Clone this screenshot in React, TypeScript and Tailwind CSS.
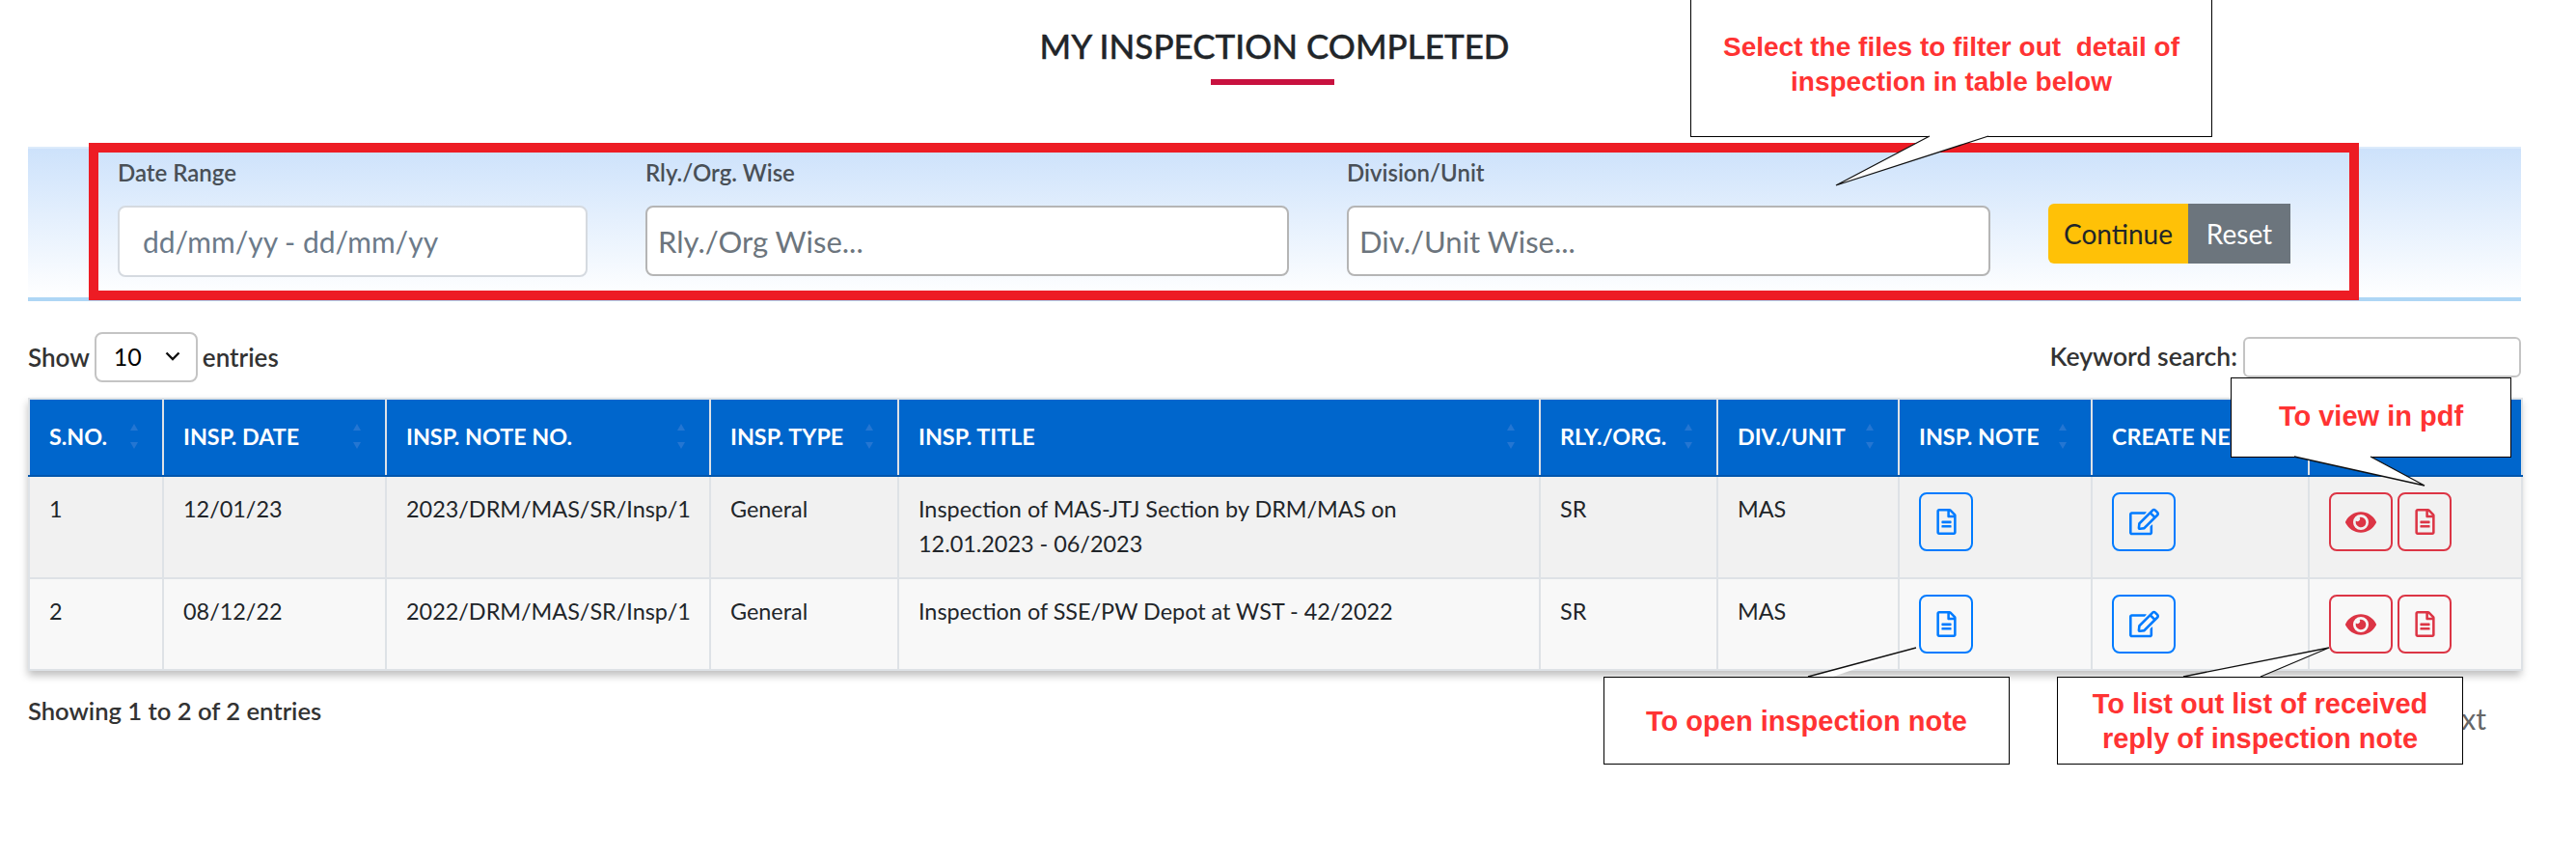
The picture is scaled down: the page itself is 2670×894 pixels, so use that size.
import React from 'react';
import { FaEye, FaRegEdit, FaRegFileAlt } from 'react-icons/fa';

const headers = [
  { label: 'S.NO.', sort: true },
  { label: 'INSP. DATE', sort: true },
  { label: 'INSP. NOTE NO.', sort: true },
  { label: 'INSP. TYPE', sort: true },
  { label: 'INSP. TITLE', sort: true },
  { label: 'RLY./ORG.', sort: true },
  { label: 'DIV./UNIT', sort: true },
  { label: 'INSP. NOTE', sort: true },
  { label: 'CREATE NEW', sort: false },
  { label: 'ACTION', sort: false },
];

const rows = [
  {
    no: '1',
    date: '12/01/23',
    note: '2023/DRM/MAS/SR/Insp/1',
    title: 'Inspection of MAS-JTJ Section by DRM/MAS on 12.01.2023 - 06/2023',
    bg: 'bg-[#f1f1f1]',
  },
  {
    no: '2',
    date: '08/12/22',
    note: '2022/DRM/MAS/SR/Insp/1',
    title: 'Inspection of SSE/PW Depot at WST - 42/2022',
    bg: 'bg-[#f8f8f8]',
  },
];

function SortArrows() {
  return (
    <svg width="10" height="26" viewBox="0 0 10 26" className="shrink-0 fill-[#2476d2]">
      <path d="M5 0 9 7H1z" />
      <path d="M5 26 1 19h8z" />
    </svg>
  );
}

function Tails() {
  const tails = [
    { fill: '2000,141 1903,192 2061,141', lines: 'M2000 141 1903 192 2061 141' },
    { fill: '2378,473 2513,503 2457,473', lines: 'M2378 473 2513 503 2457 473' },
    { fill: '1874,701 1986,671 1900,701', lines: 'M1874 701 1986 671' },
    { fill: '2263,701 2414,671 2343,701', lines: 'M2263 701 2414 671 2343 701' },
  ];
  return (
    <svg width="2670" height="894" className="absolute left-0 top-0 pointer-events-none">
      {tails.map(t => (
        <g key={t.fill}>
          <polygon points={t.fill} fill="#fff" />
          <path d={t.lines} fill="none" stroke="#111" strokeWidth="1.3" />
        </g>
      ))}
    </svg>
  );
}

function Callout({ className, children }: { className: string; children: React.ReactNode }) {
  return (
    <div className={"absolute flex items-center justify-center bg-white border-[1.5px] border-black text-center font-['Liberation_Sans',sans-serif] font-bold leading-[36px] text-[#ff3333] " + className}>
      {children}
    </div>
  );
}

export default function App() {
  return (
    <div className="relative w-[2670px] h-[894px] overflow-hidden bg-white pl-[29px] pr-[57px] font-['Lato',sans-serif] text-[#333]">
      <h1 className="pt-[25px] text-center text-[35px] leading-[44px] font-medium text-[#212529] [-webkit-text-stroke:0.4px_#212529]">MY INSPECTION COMPLETED</h1>
      <div className="mx-auto mt-[13px] h-[6px] w-[128px] -translate-x-[2px] bg-[#c8123f]"></div>

      <div className="mt-[64px] h-[160px] border-t-2 border-t-[#dcebfb] border-b-4 border-b-[#aed6f5] bg-gradient-to-b from-[#cde2fb] to-white pl-[93px]">
        <div className="flex gap-[60px]">
          <div className="w-[487px] shrink-0">
            <label className="block pt-[10px] text-[24px] leading-[30px] font-semibold text-[#495057]">Date Range</label>
            <input
              placeholder="dd/mm/yy - dd/mm/yy"
              className="mt-[19px] h-[74px] w-full rounded-lg border-2 border-[#d5dae0] bg-white pl-[24px] text-[30px] placeholder:text-[#6c7a89]"
            />
          </div>
          <div className="w-[667px] shrink-0">
            <label className="block pt-[10px] text-[24px] leading-[30px] font-semibold text-[#495057]">Rly./Org. Wise</label>
            <input
              placeholder="Rly./Org Wise..."
              className="mt-[19px] h-[73px] w-full rounded-lg border-2 border-[#b5b5b5] bg-white pl-[11px] text-[31px] placeholder:text-[#6c757d]"
            />
          </div>
          <div className="w-[667px] shrink-0">
            <label className="block pt-[10px] text-[24px] leading-[30px] font-semibold text-[#495057]">Division/Unit</label>
            <input
              placeholder="Div./Unit Wise..."
              className="mt-[19px] h-[73px] w-full rounded-lg border-2 border-[#b5b5b5] bg-white pl-[11px] text-[31px] placeholder:text-[#6c757d]"
            />
          </div>
          <div className="mt-[57px] flex h-[62px] shrink-0 text-[28px]">
            <button type="button" className="w-[145px] rounded-l-md bg-[#ffc107] text-[#212529]">Continue</button>
            <button type="button" className="w-[106px] bg-[#6c757d] text-white">Reset</button>
          </div>
        </div>
      </div>

      <div className="mt-[32px] flex h-[52px] items-center justify-between text-[26px] font-semibold text-[#333]">
        <div className="flex items-center gap-[5px]">
          <span>Show</span>
          <div className="relative">
            <select defaultValue="10" className="h-[52px] w-[107px] appearance-none rounded-lg border-2 border-[#c4c4c4] bg-white pl-[18px] text-[25px] font-normal text-black">
              <option value="10">10</option>
              <option value="25">25</option>
              <option value="50">50</option>
            </select>
            <svg width="16" height="10" viewBox="0 0 16 10" className="absolute right-[18px] top-[20px] pointer-events-none">
              <path d="M1.5 1.5 8 8l6.5-6.5" fill="none" stroke="#111" strokeWidth="2.4" />
            </svg>
          </div>
          <span>entries</span>
        </div>
        <div className="flex items-center gap-[6px]">
          <span className="text-[26.6px]">Keyword search:</span>
          <input className="h-[42px] w-[288px] rounded-md border-2 border-[#c4c4c4] bg-white" />
        </div>
      </div>

      <div className="mt-[16px] shadow-[0_5px_8px_rgba(0,0,0,0.25)]">
        <table className="w-[2584px] table-fixed border-collapse">
          <colgroup>
            <col className="w-[139px]" />
            <col className="w-[231px]" />
            <col className="w-[336px]" />
            <col className="w-[195px]" />
            <col className="w-[665px]" />
            <col className="w-[184px]" />
            <col className="w-[188px]" />
            <col className="w-[200px]" />
            <col className="w-[225px]" />
            <col className="w-[221px]" />
          </colgroup>
          <thead>
            <tr className="h-[80px] bg-[#0066cc] text-white">
              {headers.map(h => (
                <th key={h.label} className="border-x-2 border-x-[#dee2e6] border-t-2 border-t-[#dee2e6] border-b-2 border-b-[#0056ad] pl-[20px] pr-[24px] pb-[2px] text-left text-[23.3px] font-bold">
                  <div className="flex items-center justify-between whitespace-nowrap">
                    <span>{h.label}</span>
                    {h.sort && <SortArrows />}
                  </div>
                </th>
              ))}
            </tr>
          </thead>
          <tbody className="text-[23.4px] leading-[36px] text-[#212529]">
            {rows.map(row => (
              <tr key={row.no} className={row.bg}>
                <td className="border-2 border-[#dee2e6] px-[20px] pt-[15px] pb-[17px] align-top">{row.no}</td>
                <td className="border-2 border-[#dee2e6] px-[20px] pt-[15px] pb-[17px] align-top">{row.date}</td>
                <td className="border-2 border-[#dee2e6] px-[20px] pt-[15px] pb-[17px] align-top whitespace-nowrap">{row.note}</td>
                <td className="border-2 border-[#dee2e6] px-[20px] pt-[15px] pb-[17px] align-top">General</td>
                <td className="border-2 border-[#dee2e6] pl-[20px] pr-[120px] pt-[15px] pb-[17px] align-top">{row.title}</td>
                <td className="border-2 border-[#dee2e6] px-[20px] pt-[15px] pb-[17px] align-top">SR</td>
                <td className="border-2 border-[#dee2e6] px-[20px] pt-[15px] pb-[17px] align-top">MAS</td>
                <td className="border-2 border-[#dee2e6] px-[20px] py-[16px] align-top">
                  <button type="button" className="flex h-[61px] w-[56px] items-center justify-center rounded-lg border-2 border-[#007bff] text-[#007bff]">
                    <FaRegFileAlt size={27} />
                  </button>
                </td>
                <td className="border-2 border-[#dee2e6] px-[20px] py-[16px] align-top">
                  <button type="button" className="flex h-[61px] w-[66px] items-center justify-center rounded-lg border-2 border-[#007bff] text-[#007bff]">
                    <FaRegEdit size={31} />
                  </button>
                </td>
                <td className="border-2 border-[#dee2e6] px-[20px] py-[16px] align-top">
                  <div className="flex gap-[5px]">
                    <button type="button" className="flex h-[61px] w-[66px] items-center justify-center rounded-lg border-2 border-[#dc3545] text-[#dc3545]">
                      <FaEye size={32} />
                    </button>
                    <button type="button" className="flex h-[61px] w-[56px] items-center justify-center rounded-lg border-2 border-[#dc3545] text-[#dc3545]">
                      <FaRegFileAlt size={27} />
                    </button>
                  </div>
                </td>
              </tr>
            ))}
          </tbody>
        </table>
      </div>

      <div className="mt-[22px] flex items-start justify-between pr-[36px]">
        <span className="text-[25.6px] font-semibold text-[#333]">Showing 1 to 2 of 2 entries</span>
        <div className="mt-[5px] flex items-center gap-[24px] text-[30px] text-[#666]">
          <span>Previous</span>
          <span>1</span>
          <span>Next</span>
        </div>
      </div>

      <div className="absolute left-[92px] top-[148px] h-[163px] w-[2353px] border-[10px] border-[#ed1c24]"></div>

      <Callout className="left-[1752px] -top-[4px] h-[146px] w-[541px] pb-[4px] text-[28px]">
        <span>
          Select the files to filter out&nbsp; detail of
          <br />
          inspection in table below
        </span>
      </Callout>
      <Callout className="left-[2312px] top-[391px] h-[83px] w-[291px] pb-[4px] text-[29px]">To view in pdf</Callout>
      <Callout className="left-[1662px] top-[701px] h-[91px] w-[421px] text-[29px]">To open inspection note</Callout>
      <Callout className="left-[2132px] top-[701px] h-[91px] w-[421px] text-[29px]">
        <span>
          To list out list of received
          <br />
          reply of inspection note
        </span>
      </Callout>
      <Tails />
    </div>
  );
}
